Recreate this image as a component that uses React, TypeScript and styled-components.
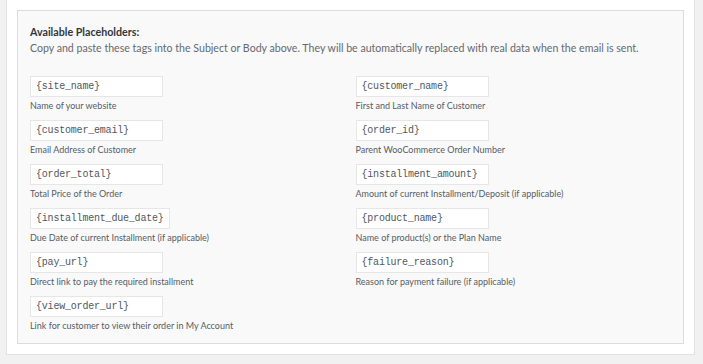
import React from "react";
import styled, { createGlobalStyle } from "styled-components";

const GlobalStyle = createGlobalStyle`
  html, body {
    margin: 0;
    padding: 0;
    background: #f1f1f1;
  }
  body {
    font-family: Lato, "Open Sans", sans-serif;
  }
`;

const Page = styled.div`
  padding: 0 8px 0 6px;
  width: 703px;
  box-sizing: border-box;
`;

const Card = styled.div`
  background: #fff;
  border: 1px solid #e2e2e2;
  border-top: none;
  padding: 10px;
`;

const Panel = styled.div`
  background: #f9f9f9;
  border: 1px solid #dcdcdc;
  padding: 13px 12px 10px;
`;

const Title = styled.div`
  font-size: 10.7px;
  line-height: 16px;
  font-weight: 700;
  color: #32373c;
`;

const Intro = styled.div`
  font-size: 10.6px;
  line-height: 16px;
  color: #646970;
  white-space: nowrap;
  margin-bottom: 20px;
`;

const Grid = styled.div`
  display: grid;
  grid-template-columns: 1fr 1fr;
  column-gap: 10px;
  row-gap: 7px;
`;

const Item = styled.div`
  display: flex;
  flex-direction: column;
  align-items: flex-start;
`;

const Tag = styled.code`
  display: inline-block;
  box-sizing: border-box;
  min-width: 133px;
  height: 21px;
  line-height: 19px;
  padding: 0 5px;
  background: #fff;
  border: 1px solid #e6e6e6;
  font-family: "Liberation Mono", "DejaVu Sans Mono", monospace;
  font-size: 10px;
  letter-spacing: -0.2px;
  color: #50575e;
`;

const Hint = styled.div`
  margin-top: 2px;
  font-size: 9px;
  line-height: 14px;
  color: #555d66;
`;

const placeholders: [string, string][] = [
  ["{site_name}", "Name of your website"],
  ["{customer_name}", "First and Last Name of Customer"],
  ["{customer_email}", "Email Address of Customer"],
  ["{order_id}", "Parent WooCommerce Order Number"],
  ["{order_total}", "Total Price of the Order"],
  ["{installment_amount}", "Amount of current Installment/Deposit (if applicable)"],
  ["{installment_due_date}", "Due Date of current Installment (if applicable)"],
  ["{product_name}", "Name of product(s) or the Plan Name"],
  ["{pay_url}", "Direct link to pay the required installment"],
  ["{failure_reason}", "Reason for payment failure (if applicable)"],
  ["{view_order_url}", "Link for customer to view their order in My Account"],
];

export default function App() {
  return (
    <Page>
      <GlobalStyle />
      <Card>
        <Panel>
          <Title>Available Placeholders:</Title>
          <Intro>
            Copy and paste these tags into the Subject or Body above. They will
            be automatically replaced with real data when the email is sent.
          </Intro>
          <Grid>
            {placeholders.map(([tag, hint]) => (
              <Item key={tag}>
                <Tag>{tag}</Tag>
                <Hint>{hint}</Hint>
              </Item>
            ))}
          </Grid>
        </Panel>
      </Card>
    </Page>
  );
}
